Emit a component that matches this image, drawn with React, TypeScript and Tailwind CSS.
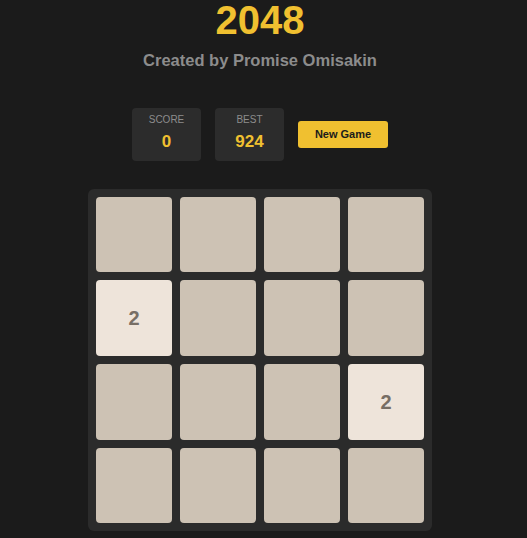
const board = [
  [0, 0, 0, 0],
  [2, 0, 0, 0],
  [0, 0, 0, 2],
  [0, 0, 0, 0],
];

function Tile({ value }: { value: number }) {
  if (!value) return <div className="w-[76px] h-[75.7px] rounded bg-[#cdc2b4]" />;
  return (
    <div className="w-[76px] h-[75.7px] rounded bg-[#eee4da] flex items-center justify-center text-[20px] font-bold text-[#776e65]">
      {value}
    </div>
  );
}

function Stat({ label, value }: { label: string; value: string }) {
  return (
    <div className="w-[69px] h-[53px] rounded bg-[#2c2c2c] flex flex-col items-center pt-[7px]">
      <span className="text-[10px] leading-none uppercase text-[#8c8c8c]">{label}</span>
      <span className="mt-[8px] text-[17px] leading-none font-bold text-[#f0c030]">{value}</span>
    </div>
  );
}

export default function App() {
  return (
    <div className="min-h-[538px] bg-[#1b1b1b] font-['Liberation_Sans',Arial,sans-serif]">
      <div className="w-[520px] flex flex-col items-center">
        <h1 className="text-[40px] leading-none font-bold text-[#f0c030]">2048</h1>
        <p className="mt-[12px] text-[16.5px] leading-none font-bold text-[#8c8c8c]">Created by Promise Omisakin</p>

        <div className="mt-[39px] flex items-center gap-[14px]">
          <Stat label="Score" value="0" />
          <Stat label="Best" value="924" />
          <button className="w-[90px] h-[27px] rounded-[3px] bg-[#f0c030] text-[11px] font-bold text-[#1b1b1b]">
            New Game
          </button>
        </div>

        <div className="mt-[28px] p-2 rounded-md bg-[#2b2b2b] grid grid-cols-4 gap-2">
          {board.flat().map((v, i) => (
            <Tile key={i} value={v} />
          ))}
        </div>
      </div>
    </div>
  );
}
